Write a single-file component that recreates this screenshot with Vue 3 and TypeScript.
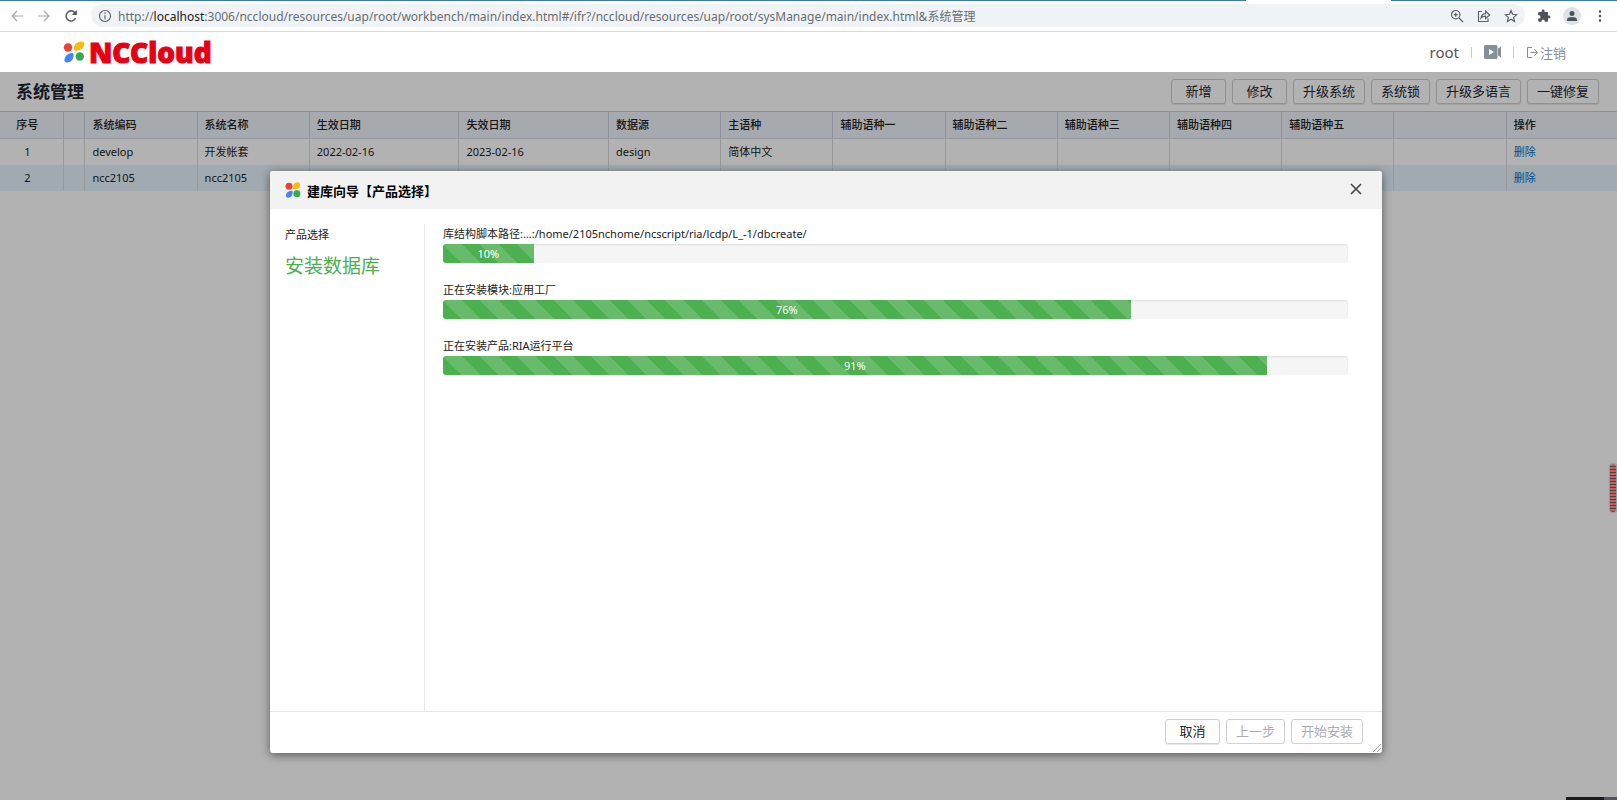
<script setup lang="ts">
interface SystemRow {
  no: number
  code: string
  name: string
  start: string
  end: string
  source: string
  language: string
}

interface Task {
  id: string
  label: string
  percent: number
}

const actions: string[] = ['新增', '修改', '升级系统', '系统锁', '升级多语言', '一键修复']

const headings: string[] = [
  '序号', '', '系统编码', '系统名称', '生效日期', '失效日期', '数据源', '主语种',
  '辅助语种一', '辅助语种二', '辅助语种三', '辅助语种四', '辅助语种五', '', '操作',
]

const rows: SystemRow[] = [
  { no: 1, code: 'develop', name: '开发帐套', start: '2022-02-16', end: '2023-02-16', source: 'design', language: '简体中文' },
  { no: 2, code: 'ncc2105', name: 'ncc2105', start: '', end: '', source: '', language: '' },
]

const tasks: Task[] = [
  { id: 'script', label: '库结构脚本路径:...:/home/2105nchome/ncscript/ria/lcdp/L_-1/dbcreate/', percent: 10 },
  { id: 'module', label: '正在安装模块:应用工厂', percent: 76 },
  { id: 'product', label: '正在安装产品:RIA运行平台', percent: 91 },
]
</script>

<template>
  <div class="screen">
    <div class="browser-bar">
      <button class="nav-button faded" aria-label="后退">
        <svg width="14" height="14" viewBox="0 0 14 14"><path d="M13 7H2M7 2L2 7l5 5" /></svg>
      </button>
      <button class="nav-button faded" aria-label="前进">
        <svg width="14" height="14" viewBox="0 0 14 14"><path d="M1 7h11M7 2l5 5-5 5" /></svg>
      </button>
      <button class="nav-button" aria-label="刷新">
        <svg width="14" height="14" viewBox="0 0 14 14"><path class="bold" d="M11.6 9A5 5 0 1 1 10.8 3.6L12 4.8" /><path class="solid" d="M12.8 1v5H7.8z" /></svg>
      </button>
      <div class="address">
        <svg class="info" width="14" height="14" viewBox="0 0 14 14"><circle cx="7" cy="7" r="5.5" /><path d="M7 6.2v4M7 3.6v1.4" /></svg>
        <span class="url">http://<b>localhost</b>:3006/nccloud/resources/uap/root/workbench/main/index.html#/ifr?/nccloud/resources/uap/root/sysManage/main/index.html&amp;系统管理</span>
        <button class="tool" aria-label="缩放">
          <svg width="14" height="14" viewBox="0 0 14 14"><circle cx="5.7" cy="5.7" r="4.2" /><path d="M9 9l4 4M3.7 5.7h4M5.7 3.7v4" /></svg>
        </button>
        <button class="tool" aria-label="分享">
          <svg width="14" height="14" viewBox="0 0 14 14"><path d="M5 2.5H1.5v10h9.500V9.500M4 9c.4-3 2-4.300 4.600-4.300V2.200L12.700 6 8.600 9.500V7.200C6.600 7.200 5 7.700 4 9z" /></svg>
        </button>
        <button class="tool" aria-label="收藏">
          <svg width="14" height="14" viewBox="0 0 14 14"><path d="M7 1.500l1.600 3.800 4.100.4-3.100 2.700.9 4L7 10.300 3.500 12.400l.9-4L1.300 5.700l4.100-.4z" /></svg>
        </button>
      </div>
      <button class="tool dark" aria-label="扩展程序">
        <svg width="14" height="14" viewBox="0 0 24 24"><path class="solid" d="M20.500 11H19V7c0-1.100-.9-2-2-2h-4V3.500a2.500 2.500 0 0 0-5 0V5H4c-1.100 0-2 .9-2 2v3.800h1.500a2.700 2.700 0 0 1 0 5.400H2V20c0 1.100.9 2 2 2h3.800v-1.500a2.700 2.700 0 0 1 5.400 0V22H17c1.100 0 2-.9 2-2v-4h1.500a2.500 2.500 0 0 0 0-5z" /></svg>
      </button>
      <button class="avatar" aria-label="用户">
        <svg width="12" height="12" viewBox="0 0 12 12"><circle class="solid" cx="6" cy="3.500" r="2.500" /><path class="solid" d="M1 11V9.500C1 7.800 3.500 7 6 7s5 .8 5 2.500V11z" /></svg>
      </button>
      <button class="tool dark" aria-label="菜单">
        <svg width="14" height="14" viewBox="0 0 14 14"><circle class="solid" cx="7" cy="2.500" r="1.300" /><circle class="solid" cx="7" cy="7" r="1.300" /><circle class="solid" cx="7" cy="11.500" r="1.300" /></svg>
      </button>
    </div>

    <header class="app-header">
      <a class="brand" href="#">
        <svg width="22" height="22" viewBox="0 0 22 22">
          <circle cx="5" cy="6.500" r="4.200" fill="#ea4335" />
          <path d="M11 8.500C10.500 4 13 1 19 .5c2 0 2.500 1.500 2 3.500-.8 4-4 5.500-8 5.700-1.300 0-2-.3-2-1.200z" fill="#fbbc05" />
          <path d="M10.500 13c.5 4.500-1.500 7.800-6 8.500-2.500.3-3.500-1.300-3-3.500.7-3.500 3-5.500 7-6 1.200-.1 1.900.1 2 1z" fill="#4285f4" />
          <circle cx="16.800" cy="15.500" r="4.200" fill="#34a853" />
        </svg>
        <span>NCCloud</span>
      </a>
      <nav class="account">
        <span class="user">root</span>
        <i class="bar"></i>
        <button class="video" aria-label="视频">
          <svg width="17" height="14" viewBox="0 0 17 14"><path fill="#868e9b" fill-rule="evenodd" d="M1.500 0h10.500q1.500 0 1.500 1.500v11q0 1.500-1.500 1.500H1.500Q0 14 0 12.500v-11Q0 0 1.500 0zM5 4v6l5-3zM14 3.500L17 1.500v11L14 10.500z" /></svg>
        </button>
        <i class="bar"></i>
        <a class="logout" href="#">
          <svg width="13" height="13" viewBox="0 0 13 13"><path d="M6 1.500H1.500v10H6M4.500 6.500h7M8.500 3.500l3 3-3 3" /></svg>注销
        </a>
      </nav>
    </header>

    <main class="workspace">
      <div class="title-row">
        <h1>系统管理</h1>
        <div class="actions">
          <button v-for="action in actions" :key="action" class="btn">{{ action }}</button>
        </div>
      </div>
      <table>
        <colgroup>
          <col class="c-no"><col class="c-check"><col class="c-text"><col class="c-text">
          <col class="c-date"><col class="c-date">
          <col v-for="n in 8" :key="n" class="c-text">
          <col>
        </colgroup>
        <thead>
          <tr><th v-for="(heading, i) in headings" :key="i">{{ heading }}</th></tr>
        </thead>
        <tbody>
          <tr v-for="row in rows" :key="row.no" :class="{ selected: row.no === 2 }">
            <td>{{ row.no }}</td>
            <td></td>
            <td>{{ row.code }}</td>
            <td>{{ row.name }}</td>
            <td>{{ row.start }}</td>
            <td>{{ row.end }}</td>
            <td>{{ row.source }}</td>
            <td>{{ row.language }}</td>
            <td v-for="n in 6" :key="n"></td>
            <td><a href="#">删除</a></td>
          </tr>
        </tbody>
      </table>

      <div class="mask">
        <section class="dialog" role="dialog" aria-labelledby="wizard-title">
          <header class="dialog-head">
            <svg width="16" height="16" viewBox="0 0 22 22">
              <circle cx="5.500" cy="6" r="4.800" fill="#ea4335" />
              <path d="M11 8.500C10.500 4 13 1 17 .5c3 0 4 1.500 3.500 4.500-.8 4-3.500 4.700-7.500 4.900-1.300 0-2-.5-2-1.400z" fill="#fbbc05" />
              <path d="M10.500 13c.5 4.500-1.500 7.800-5.500 8.500-3 .3-4-1.300-3.500-4 .7-3.500 3-5 7-5.500 1.200-.1 1.900.1 2 1z" fill="#4285f4" />
              <circle cx="16.300" cy="16" r="4.800" fill="#34a853" />
            </svg>
            <h2 id="wizard-title">建库向导【产品选择】</h2>
            <button class="close" aria-label="关闭">
              <svg width="12" height="12" viewBox="0 0 12 12"><path d="M1 1l10 10M11 1L1 11" /></svg>
            </button>
          </header>
          <div class="dialog-body">
            <ol class="steps">
              <li>产品选择</li>
              <li class="current">安装数据库</li>
            </ol>
            <div class="tasks">
              <div v-for="task in tasks" :key="task.id" class="task">
                <span :id="task.id" class="task-label">{{ task.label }}</span>
                <div class="track" role="progressbar" :aria-labelledby="task.id" :aria-valuenow="task.percent">
                  <div class="fill" :style="{ width: task.percent + '%' }">{{ task.percent }}%</div>
                </div>
              </div>
            </div>
          </div>
          <footer class="dialog-foot">
            <button class="btn">取消</button>
            <button class="btn" disabled>上一步</button>
            <button class="btn" disabled>开始安装</button>
            <svg class="grip" width="10" height="10" viewBox="0 0 10 10"><path d="M1 9L9 1M5 9l4-4" /></svg>
          </footer>
        </section>
      </div>
      <div class="side-meter"></div>
      <div class="dock"></div>
    </main>
  </div>
</template>

<style>
html,
body,
#app {
  height: 100%;
}

body {
  margin: 0;
  overflow: hidden;
}
</style>

<style scoped>
.screen {
  display: flex;
  flex-direction: column;
  height: 100vh;
  background: #fff;
  color: #222;
  font-family: "Noto Sans", "Noto Sans CJK SC", sans-serif;
  font-size: 11px;
}

* {
  box-sizing: border-box;
}

button {
  padding: 0;
  border: 0;
  background: none;
  font: inherit;
  color: inherit;
}

a {
  color: inherit;
  text-decoration: none;
}

svg {
  display: block;
  flex: none;
}

/* browser bar */
.browser-bar {
  display: flex;
  align-items: center;
  flex: none;
  height: 32px;
  padding: 0 10px 2px;
  border-top: 1px solid #3f78ad;
  border-image: linear-gradient(90deg, #3f78ad 77%, #fff 77%, #fff 86%, #3f78ad 86%) 1;
  box-shadow: inset 0 -1px #d5dade;
}

.browser-bar svg {
  fill: none;
  stroke: #5f6368;
  stroke-width: 1.2;
}

.browser-bar .bold {
  stroke-width: 1.6;
}

.browser-bar .solid {
  fill: #4d5358;
  stroke: none;
}

.nav-button {
  width: 14px;
  margin-right: 13px;
}

.nav-button.faded {
  opacity: 0.55;
}

.address {
  display: flex;
  align-items: center;
  gap: 13px;
  flex: 1;
  height: 23px;
  margin-right: 12px;
  padding: 0 7px;
  border-radius: 12px;
  background: #f0f3f6;
}

.info {
  margin-right: -7px;
}

.url {
  flex: 1;
  color: #686d72;
  font-size: 12px;
  white-space: nowrap;
}

.url b {
  color: #202124;
  font-weight: 400;
}

.avatar {
  display: grid;
  place-items: center;
  width: 18px;
  height: 18px;
  margin: 0 12px;
  border-radius: 50%;
  background: #dde1e8;
}

/* product header */
.app-header {
  display: flex;
  align-items: center;
  justify-content: space-between;
  flex: none;
  height: 40px;
  padding: 0 51px 0 63px;
}

.brand {
  display: flex;
  align-items: center;
  gap: 4px;
  color: #e60012;
  font-size: 28px;
  font-weight: 900;
  line-height: 30px;
  -webkit-text-stroke: 1px #e60012;
}

.account {
  display: flex;
  align-items: center;
  gap: 12px;
  color: #868e9b;
  font-size: 13px;
}

.user {
  color: #555;
  font-size: 15px;
}

.bar {
  width: 1px;
  height: 11px;
  background: #c8ccd2;
}

.logout {
  display: flex;
  align-items: center;
  gap: 1px;
}

.logout svg {
  fill: none;
  stroke: #868e9b;
}

/* page */
.workspace {
  position: relative;
  flex: 1;
}

.title-row {
  display: flex;
  align-items: center;
  justify-content: space-between;
  height: 39px;
  padding: 0 18px 0 16px;
}

h1 {
  margin: 0;
  color: #22242f;
  font-size: 17px;
  font-weight: 700;
  line-height: 24px;
}

.actions {
  display: flex;
  gap: 6px;
}

.btn {
  min-width: 55px;
  height: 25px;
  padding: 0 9px 2px;
  border: 1px solid #d0d0d0;
  border-radius: 3px;
  background: #fff;
  box-shadow: 0 1px 1px rgba(0, 0, 0, 0.1);
  color: #22242f;
  font-size: 13px;
  line-height: 20px;
}

.btn:disabled {
  box-shadow: none;
  color: #aaaab2;
}

table {
  width: 100%;
  table-layout: fixed;
  border-collapse: collapse;
}

.c-no {
  width: 3.9%;
}

.c-check {
  width: 1.35%;
}

.c-text {
  width: 6.94%;
}

.c-date {
  width: 9.25%;
}

th,
td {
  height: 26px;
  padding: 0 7px;
  border-right: 1px solid #dcdcdc;
  text-align: left;
  line-height: 16px;
  white-space: nowrap;
}

th {
  height: 27px;
  border-top: 1px solid #cbd0d8;
  border-right-color: #cbd0d8;
  border-bottom: 1px solid #d5dae2;
  background: #eef2f8;
  font-weight: 500;
}

th:first-child,
td:first-child {
  padding-right: 15px;
  text-align: center;
}

th:last-child,
td:last-child {
  border-right: 0;
}

.selected {
  background: #e7f4fd;
}

td a {
  color: #0b6fc5;
}

/* dialog */
.mask {
  position: absolute;
  inset: 0;
  display: flex;
  justify-content: center;
  padding: 99px 235px 47px 270px;
  background: rgba(0, 0, 0, 0.3);
}

.dialog {
  display: flex;
  flex-direction: column;
  flex: 1;
  border-radius: 3px;
  background: #fff;
  box-shadow: 0 2px 10px rgba(0, 0, 0, 0.5);
  overflow: hidden;
}

.dialog-head {
  display: flex;
  align-items: center;
  gap: 6px;
  flex: none;
  height: 38px;
  padding: 0 20px 0 15px;
  background: #f2f2f2;
}

h2 {
  flex: 1;
  margin: 0;
  color: #000;
  font-size: 13px;
  font-weight: 700;
}

.close {
  padding-bottom: 2px;
}

.close svg {
  fill: none;
  stroke: #444;
  stroke-width: 1.6;
}

.dialog-body {
  display: flex;
  flex: 1;
  padding: 15px 34px 0 15px;
}

.steps {
  width: 140px;
  margin: 0;
  padding: 0;
  border-right: 1px solid #e8e8e8;
  list-style: none;
  line-height: 22px;
}

.steps .current {
  margin-top: 6px;
  color: #4caf50;
  font-size: 19px;
  line-height: 28px;
}

.tasks {
  display: flex;
  flex-direction: column;
  gap: 17px;
  flex: 1;
  padding-left: 18px;
}

.task-label {
  display: block;
  padding: 2px 0;
  line-height: 16px;
}

.track {
  height: 19px;
  border-radius: 3px;
  background: #f5f5f5;
  box-shadow: inset 0 1px 2px rgba(0, 0, 0, 0.1);
  overflow: hidden;
}

.fill {
  height: 100%;
  background: linear-gradient(45deg, rgba(255, 255, 255, 0.15) 25%, transparent 25%, transparent 50%, rgba(255, 255, 255, 0.15) 50%, rgba(255, 255, 255, 0.15) 75%, transparent 75%) 0 0 / 37px 37px #4caf50;
  color: #fff;
  line-height: 19px;
  text-align: center;
}

.dialog-foot {
  position: relative;
  display: flex;
  align-items: flex-start;
  justify-content: flex-end;
  gap: 6px;
  flex: none;
  height: 42px;
  padding: 7px 19px 0;
  border-top: 1px solid #e4e4e4;
}

.grip {
  position: absolute;
  right: 0;
  bottom: 0;
  stroke: #aaa;
}

.side-meter {
  position: absolute;
  top: 392px;
  right: 1px;
  width: 6px;
  height: 48px;
  border-radius: 3px;
  background: repeating-linear-gradient(#b96464 0 2px, #5e3a3c 2px 3px);
  box-shadow: 0 0 1px 1px #8f9894;
}

.dock {
  position: absolute;
  right: 0;
  bottom: 0;
  width: 51px;
  height: 3px;
  background: linear-gradient(90deg, #1b1b20 75%, #55545c 75%);
}
</style>
